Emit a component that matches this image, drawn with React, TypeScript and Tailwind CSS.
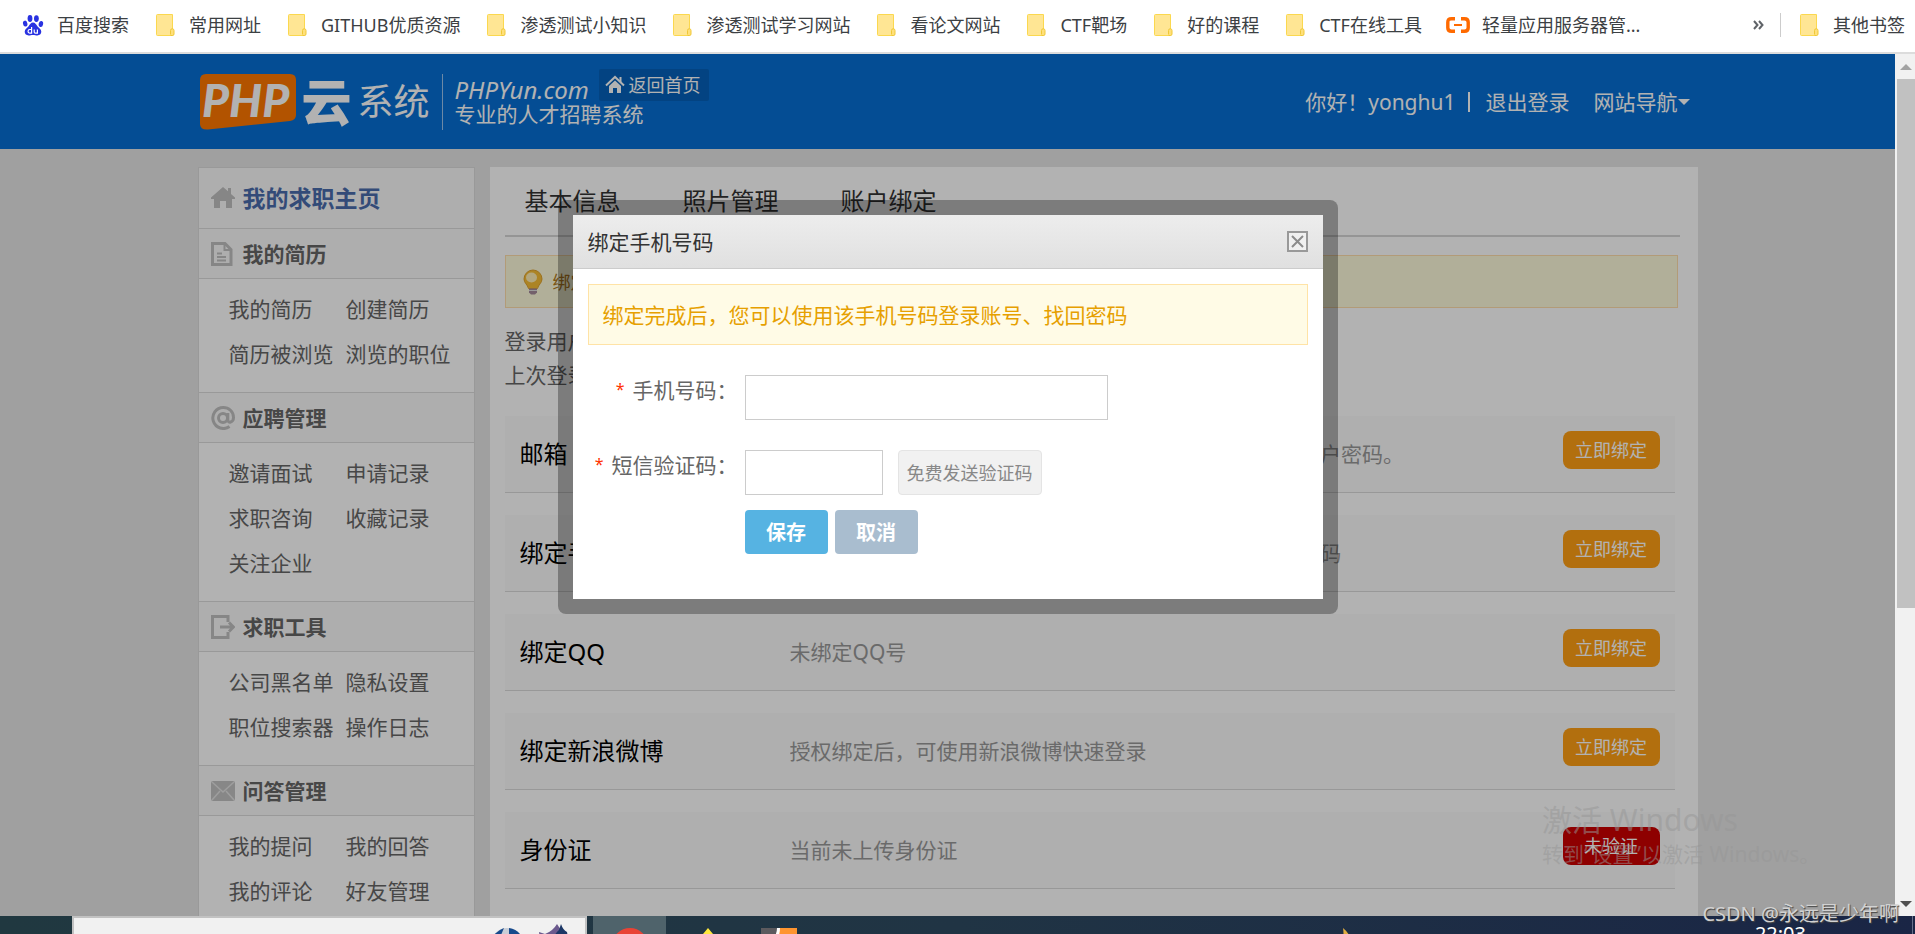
import { useState } from 'react'
import { clsx } from 'clsx'

const bookmarks = [
  { name: '百度搜索', icon: 'baidu' },
  { name: '常用网址', icon: 'folder' },
  { name: 'GITHUB优质资源', icon: 'folder' },
  { name: '渗透测试小知识', icon: 'folder' },
  { name: '渗透测试学习网站', icon: 'folder' },
  { name: '看论文网站', icon: 'folder' },
  { name: 'CTF靶场', icon: 'folder' },
  { name: '好的课程', icon: 'folder' },
  { name: 'CTF在线工具', icon: 'folder' },
  { name: '轻量应用服务器管...', icon: 'aliyun' },
]

const menu = [
  { title: '我的简历', icon: 'doc', links: ['我的简历', '创建简历', '简历被浏览', '浏览的职位'] },
  { title: '应聘管理', icon: 'at', links: ['邀请面试', '申请记录', '求职咨询', '收藏记录', '关注企业'] },
  { title: '求职工具', icon: 'exit', links: ['公司黑名单', '隐私设置', '职位搜索器', '操作日志'] },
  { title: '问答管理', icon: 'mail', links: ['我的提问', '我的回答', '我的评论', '好友管理'] },
]

const bindings = [
  { title: '邮箱', desc: '绑定邮箱后可以使用该邮箱登录， 并可通过它找回您的账户密码。', action: '立即绑定' },
  { title: '绑定手机', desc: '绑定完成后您可以使用该手机号码登录账号,找回账户的密码', action: '立即绑定' },
  { title: '绑定QQ', desc: '未绑定QQ号', action: '立即绑定' },
  { title: '绑定新浪微博', desc: '授权绑定后，可使用新浪微博快速登录', action: '立即绑定' },
  { title: '身份证', desc: '当前未上传身份证', action: '未验证', danger: true },
]

function BookmarkIcon({ type }: { type: string }) {
  if (type === 'baidu') {
    return (
      <svg viewBox="0 0 24 24" className="h-6 w-6 shrink-0" fill="#2932e1">
        <ellipse cx="9" cy="5.5" rx="2.4" ry="3.4" />
        <ellipse cx="15.4" cy="5.6" rx="2.4" ry="3.4" />
        <ellipse cx="4.2" cy="10.6" rx="2.2" ry="3" transform="rotate(-12 4.2 10.6)" />
        <ellipse cx="19.9" cy="11" rx="2.2" ry="3" transform="rotate(12 19.9 11)" />
        <path d="M12 9.6c2.2 0 3 1.9 4.4 3.6 1.5 1.7 3.9 2.8 3.9 5.6 0 2.3-1.8 3.6-3.9 3.6-1.6 0-2.7-.5-4.4-.5s-2.8.5-4.4.5c-2.2 0-3.9-1.3-3.9-3.6 0-2.8 2.4-3.9 3.9-5.6C9 11.5 9.8 9.6 12 9.6z" />
        <path d="M10.6 14v6.2H8.9a1.8 1.8 0 0 1 0-3.7h1.7M13.2 16.4V19c0 .8.5 1.2 1.2 1.2h2v-3.8" fill="none" stroke="#fff" strokeWidth="1.2" />
      </svg>
    )
  }
  if (type === 'aliyun') {
    return (
      <svg viewBox="0 0 24 24" className="h-6 w-6 shrink-0" fill="none" stroke="#ff6a00" strokeWidth="3.4">
        <path d="M9 5.7H5.5Q1.8 5.7 1.8 9.2v5.6q0 3.5 3.7 3.5H9M15 5.7h3.5q3.7 0 3.7 3.5v5.6q0 3.5-3.7 3.5H15" />
        <path d="M8 12h8" strokeWidth="2" />
      </svg>
    )
  }
  return (
    <svg viewBox="0 0 24 24" className="h-6 w-6 shrink-0">
      <path d="M4.5 1.5h15v21h-15a1 1 0 0 1-1-1v-19a1 1 0 0 1 1-1z" fill="#ffe694" stroke="#fbd84f" />
      <path d="M17.5 21.5v-4a1.7 1.7 0 0 1 3.5 0V21q0 1.5-1.5 1.5h-2" fill="#ffe07a" stroke="#f0c838" />
    </svg>
  )
}

function MenuIcon({ type }: { type: string }) {
  return (
    <svg viewBox="0 0 24 24" className="h-6 w-6 shrink-0" fill="none" stroke="#c0c0c0" strokeWidth="3">
      {type === 'home' && (
        <path d="M12 1 0 11.5V13h3v9h6v-7h6v7h6v-9h3v-1.5L20 8V2h-3v3.300z" fill="#c0c0c0" stroke="none" />
      )}
      {type === 'doc' && (
        <>
          <path d="M1.5 1.5H14l6 6v15H1.5z" />
          <path d="M13.5 2v6H20" strokeWidth="2" />
          <path d="M6 11.5h5M6 15h9M6 18.5h9" strokeWidth="2" />
        </>
      )}
      {type === 'at' && (
        <>
          <circle cx="12" cy="12" r="4.5" />
          <path d="M16.8 7v7c0 3.6 5.7 2.6 5.7-2.5 0-6-4.600-10-10.300-10A10.500 10.500 0 1 0 18.500 20.500" />
        </>
      )}
      {type === 'exit' && (
        <>
          <path d="M17 7V1.5H1.5v21H17V17" />
          <path d="M9 12h12M18 7.5l4.500 4.500-4.500 4.500" />
        </>
      )}
      {type === 'mail' && (
        <>
          <rect x="0" y="2" width="24" height="20" rx="2" fill="#c2c2c2" stroke="none" />
          <path d="m1 3 11 10L23 3M1 21l8-9M23 21l-8-9" stroke="#e2e2e2" strokeWidth="1.5" />
        </>
      )}
    </svg>
  )
}

function BulbIcon() {
  return (
    <svg viewBox="0 0 20 26" className="h-[26px] w-5 shrink-0">
      <path d="M10 1a9 9 0 0 1 9 9c0 4-3.500 5.500-4.500 9.500h-9C4.500 15.500 1 14 1 10a9 9 0 0 1 9-9z" fill="#f7bd35" stroke="#dfa22c" />
      <ellipse cx="8.5" cy="8.5" rx="5.5" ry="5" fill="#fff0b8" />
      <path d="M6 19.500h8v4l-2 2H8l-2-2z" fill="#a58a9a" />
      <path d="M6 21.500h8" stroke="#ddd" />
    </svg>
  )
}

function BookmarksBar() {
  return (
    <nav className="flex h-[54px] shrink-0 items-center border-b-2 border-[#dcdcdc] bg-white pb-0.5 pl-[21px] text-lg leading-6 text-[#3c4043]">
      <div className="flex min-w-0 flex-1 items-center gap-6 overflow-hidden">
        {bookmarks.map((item) => (
          <a key={item.name} href="#" className="flex shrink-0 items-center gap-3 whitespace-nowrap">
            <BookmarkIcon type={item.icon} />
            {item.name}
          </a>
        ))}
      </div>
      <button className="mr-3 h-6 w-5" aria-label="更多书签">
        <svg viewBox="0 0 20 24" className="h-6 w-5" fill="none" stroke="#5f6368" strokeWidth="2">
          <path d="m6 8 3.500 4L6 16M11 8l3.500 4-3.500 4" />
        </svg>
      </button>
      <a href="#" className="flex shrink-0 items-center gap-3 border-l border-[#ccc] pr-2.5 pl-4 whitespace-nowrap">
        <BookmarkIcon type="folder" />
        其他书签
      </a>
    </nav>
  )
}

function Logo() {
  return (
    <a href="#" className="flex items-center text-white">
      <svg viewBox="0 0 96 56" className="h-14 w-24 overflow-visible">
        <path d="M6 0h84q6 0 6 6v35q0 5-6 6L8 55.500Q0 56 0 50V6q0-6 6-6z" fill="#ff7800" />
        <text x="2" y="43" fontSize="46" fontWeight="900" fontStyle="italic" fill="#fff" className="font-[Lato]">
          PHP
        </text>
      </svg>
      <span className="ml-1.5 text-[50px] leading-14 font-black">云</span>
      <span className="ml-1.5 text-[36px] leading-12">系统</span>
      <span className="mx-3 h-14 w-px bg-white/60" />
      <span className="flex flex-col">
        <span className="text-2xl leading-6 italic">PHPYun.com</span>
        <span className="text-[21px] leading-6">专业的人才招聘系统</span>
      </span>
    </a>
  )
}

function SiteHeader() {
  return (
    <header className="h-[95px] bg-[#066fd5] text-white">
      <div className="mx-auto flex h-full max-w-[1500px] items-center justify-between">
        <div className="relative flex items-center pl-0.5">
          <Logo />
          <a
            href="#"
            className="absolute top-[-5px] left-[401px] flex h-8 w-[110px] items-center gap-1 rounded-xs bg-[#0561ba] pl-1.5 text-lg leading-6 whitespace-nowrap"
          >
            <svg viewBox="0 0 20 20" className="h-5 w-5" fill="none" stroke="#fff" strokeWidth="2">
              <path d="m1 10.500 9-8.500 9 8.500" />
              <path d="M10 5.500 4 11v7h4v-5h4v5h4v-7z" fill="#fff" stroke="none" />
              <path d="M15.500 2v5" />
            </svg>
            返回首页
          </a>
        </div>
        <div className="flex items-center pr-2 text-[21px] leading-8">
          <span>你好！yonghu1</span>
          <span className="mr-4 ml-3 h-5 w-0.5 bg-white" />
          <a href="#">退出登录</a>
          <button className="ml-6 flex items-center">
            网站导航
            <span className="border-x-[6px] border-t-[6px] border-x-transparent border-t-white" />
          </button>
        </div>
      </div>
    </header>
  )
}

function Sidebar() {
  return (
    <aside className="w-[277px] shrink-0 border border-[#dcdcdc] bg-white">
      <a href="#" className="flex h-[60px] items-center gap-2 bg-[#fafafa] pl-3 text-[23px] leading-8 font-bold text-[#4a6cad]">
        <MenuIcon type="home" />
        我的求职主页
      </a>
      {menu.map((section) => (
        <section key={section.title}>
          <h2 className="flex h-[51px] items-center gap-2 border-y border-[#dcdcdc] bg-[#fafafa] pl-3 text-[21px] leading-8 font-bold text-[#666]">
            <MenuIcon type={section.icon} />
            {section.title}
          </h2>
          <ul className="grid grid-cols-[117px_1fr] pt-2 pb-[15px] pl-[30px] text-[21px] leading-[45px] text-[#666]">
            {section.links.map((link) => (
              <li key={link} className="whitespace-nowrap">
                <a href="#">{link}</a>
              </li>
            ))}
          </ul>
        </section>
      ))}
    </aside>
  )
}

function AccountPanel({ onBind }: { onBind: () => void }) {
  return (
    <main className="min-w-0 flex-1 bg-white pb-12 pl-[15px]">
      <nav className="mr-[18px] flex h-[70px] items-center gap-[62px] border-b-2 border-[#d6d6d6] pl-5 text-2xl text-[#333]">
        <a href="#">基本信息</a>
        <a href="#">照片管理</a>
        <a href="#">账户绑定</a>
      </nav>
      <div className="mt-[18px] mr-5 flex h-[53px] items-center gap-2.5 border border-[#ffdeac] bg-[#fefbdc] pl-[17px] text-lg text-[#b07a20]">
        <BulbIcon />
        绑定账户
      </div>
      <div className="mt-4 text-[21px] leading-[34px] text-[#666]">
        <p>登录用户名</p>
        <p>上次登录时间</p>
      </div>
      <ul className="mt-6 mr-[23px] flex flex-col gap-[22px]">
        {bindings.map((item) => (
          <li key={item.title} className="flex h-[77px] items-center border-b border-[#dadada] bg-[#fbfbfb] px-[15px]">
            <h3 className="w-[270px] shrink-0 text-2xl text-black">{item.title}</h3>
            <p className="min-w-0 flex-1 truncate text-[21px] leading-8 text-[#999]">{item.desc}</p>
            <button
              onClick={onBind}
              className={clsx(
                'mt-[15px] h-[38px] w-[97px] shrink-0 self-start rounded-lg text-lg leading-6 text-white',
                item.danger ? 'bg-[#cc0000]' : 'bg-[#ffa015]'
              )}
            >
              {item.action}
            </button>
          </li>
        ))}
      </ul>
    </main>
  )
}

function FieldLabel({ htmlFor, text }: { htmlFor: string; text: string }) {
  return (
    <label htmlFor={htmlFor} className="flex w-[165px] shrink-0 justify-end gap-2 self-start text-[21px] leading-[30px] text-[#666]">
      <span className="text-base leading-7 text-[#ff3300]">*</span>
      {text}
    </label>
  )
}

function BindPhoneDialog({ onClose }: { onClose: () => void }) {
  return (
    <div className="absolute inset-0 flex items-start justify-center bg-black/30 pt-[146px]">
      <div className="rounded-lg bg-black/30 p-[15px]">
        <div role="dialog" aria-label="绑定手机号码" className="w-[750px] bg-white pb-[45px]">
          <div className="flex h-[54px] items-center justify-between border-b border-[#ccc] bg-linear-to-b from-[#ededed] to-[#e0e0e0] px-[15px]">
            <h2 className="text-[21px] leading-8 text-[#333]">绑定手机号码</h2>
            <button onClick={onClose} aria-label="关闭" className="flex h-[21px] w-[21px] items-center justify-center border-2 border-[#999] bg-[#f0f0f0]">
              <svg viewBox="0 0 13 13" className="h-[13px] w-[13px]" stroke="#8c8c8c" strokeWidth="2">
                <path d="m1 1 11 11M12 1 1 12" />
              </svg>
            </button>
          </div>
          <p className="mx-[15px] mt-[15px] flex h-[61px] items-center border border-[#ffe3a6] bg-[#fffbe6] px-3.5 text-[21px] leading-8 text-[#e6a000]">
            绑定完成后，您可以使用该手机号码登录账号、找回密码
          </p>
          <form onSubmit={(e) => e.preventDefault()} className="mt-[30px]">
            <div className="flex items-center">
              <FieldLabel htmlFor="phone" text="手机号码：" />
              <input id="phone" type="tel" className="ml-[7px] h-[45px] w-[363px] border border-[#ccc] px-2 text-[21px] outline-none" />
            </div>
            <div className="mt-[30px] flex items-center">
              <FieldLabel htmlFor="code" text="短信验证码：" />
              <input id="code" type="text" className="ml-[7px] h-[45px] w-[138px] border border-[#ccc] px-2 text-[21px] outline-none" />
              <button type="button" className="ml-[15px] h-[45px] w-36 rounded-sm border border-[#e4e4e4] bg-[#f1f1f1] text-lg text-[#888]">
                免费发送验证码
              </button>
            </div>
            <div className="mt-[15px] flex gap-[7px] pl-[172px] text-xl font-bold text-white">
              <button type="submit" className="h-11 w-[83px] rounded-sm bg-[#56b3e2] pt-0.5">保存</button>
              <button type="button" onClick={onClose} className="h-11 w-[83px] rounded-sm bg-[#a9bdcf] pt-0.5">取消</button>
            </div>
          </form>
        </div>
      </div>
    </div>
  )
}

function Scrollbar() {
  return (
    <div className="flex w-5 shrink-0 flex-col items-center bg-[#f1f1f1] pl-0.5">
      <svg viewBox="0 0 18 25" className="h-[25px] w-[18px]" fill="#a3a3a3">
        <path d="m3 16 6-6 6 6z" />
      </svg>
      <div className="h-[529px] w-full bg-[#c1c1c1]" />
      <svg viewBox="0 0 18 25" className="mt-auto h-[25px] w-[18px]" fill="#505050">
        <path d="m3 10 6 6 6-6z" />
      </svg>
    </div>
  )
}

function Taskbar() {
  return (
    <footer className="flex h-[18px] shrink-0 items-start overflow-hidden bg-linear-to-r from-[#203840] via-[#203444] to-[#1a2545]">
      <div className="ml-[72px] flex h-12 w-[515px] justify-end border-2 border-[#c2c2c2] bg-[#f1f1f1] pr-2.5">
        <svg viewBox="0 0 84 46" className="h-[46px] w-[84px]">
          <circle cx="16" cy="26" r="16" fill="#c9ced6" />
          <path d="M18 10q7 1 11 6l-3 8-8-6z" fill="#174a8c" />
          <path d="M3 17q4-5 10-7l-3 7z" fill="#174a8c" />
          <path d="M48 14q3 1 6 2 8-3 12-10 4 7 10 10l6 30H52z" fill="#6c5a8e" />
          <path d="M70 6q2 6 6 8l6 32H56q4-28 12-34z" fill="#1c3766" />
        </svg>
      </div>
      <button className="ml-1.5 flex h-12 w-[73px] justify-center bg-[#4f636b]" aria-label="Chrome">
        <svg viewBox="0 0 36 48" className="h-12 w-9">
          <circle cx="18" cy="30" r="18" fill="#e94335" />
        </svg>
      </button>
      <svg viewBox="0 0 36 48" className="ml-6 h-12 w-9">
        <path d="m18 12 5 6 12 12-8 16H8L2 30l11-12z" fill="#ffe83d" />
      </svg>
      <svg viewBox="0 0 36 48" className="ml-[35px] h-12 w-9">
        <path d="M0 12h36v36H0z" fill="#ff9530" />
        <path d="M0 12h17q1 6-3 12L0 30z" fill="#5c5a5e" />
        <path d="M16 12h3q0 8-4 12l-3-1q4-5 4-11z" fill="#fff" />
      </svg>
      <svg viewBox="0 0 36 48" className="mr-auto ml-[530px] h-12 w-9">
        <path d="M16 12q10 8 10 24H12q6-12 4-24z" fill="#e3ae3f" />
      </svg>
      <time className="mr-[106px] pt-1.5 text-xl leading-6 text-white">22:03</time>
      <span className="mr-0.5 h-12 w-px bg-[#66708a]" />
    </footer>
  )
}

export default function App() {
  const [open, setOpen] = useState(true)

  return (
    <div className="relative flex h-screen flex-col overflow-hidden font-['Noto_Sans','Noto_Sans_CJK_SC',sans-serif]">
      <BookmarksBar />
      <div className="flex min-h-0 flex-1">
        <div className="relative min-w-0 flex-1 overflow-hidden bg-[#e6e6e6]">
          <SiteHeader />
          <div className="mx-auto mt-[18px] flex max-w-[1500px] gap-[15px]">
            <Sidebar />
            <AccountPanel onBind={() => setOpen(true)} />
          </div>
          {open && <BindPhoneDialog onClose={() => setOpen(false)} />}
        </div>
        <Scrollbar />
      </div>
      <Taskbar />

      {/* Windows activation notice */}
      <div className="pointer-events-none absolute right-[94px] bottom-16 w-[279px] whitespace-nowrap text-[#969696]/50">
        <p className="text-[30px] leading-9">激活 Windows</p>
        <p className="text-[21px] leading-8">转到“设置”以激活 Windows。</p>
      </div>
      <p className="pointer-events-none absolute right-4 bottom-1.5 text-xl leading-7 text-[#d2d2d2] [text-shadow:1px_1px_1px_#444]">
        CSDN @永远是少年啊
      </p>
    </div>
  )
}
